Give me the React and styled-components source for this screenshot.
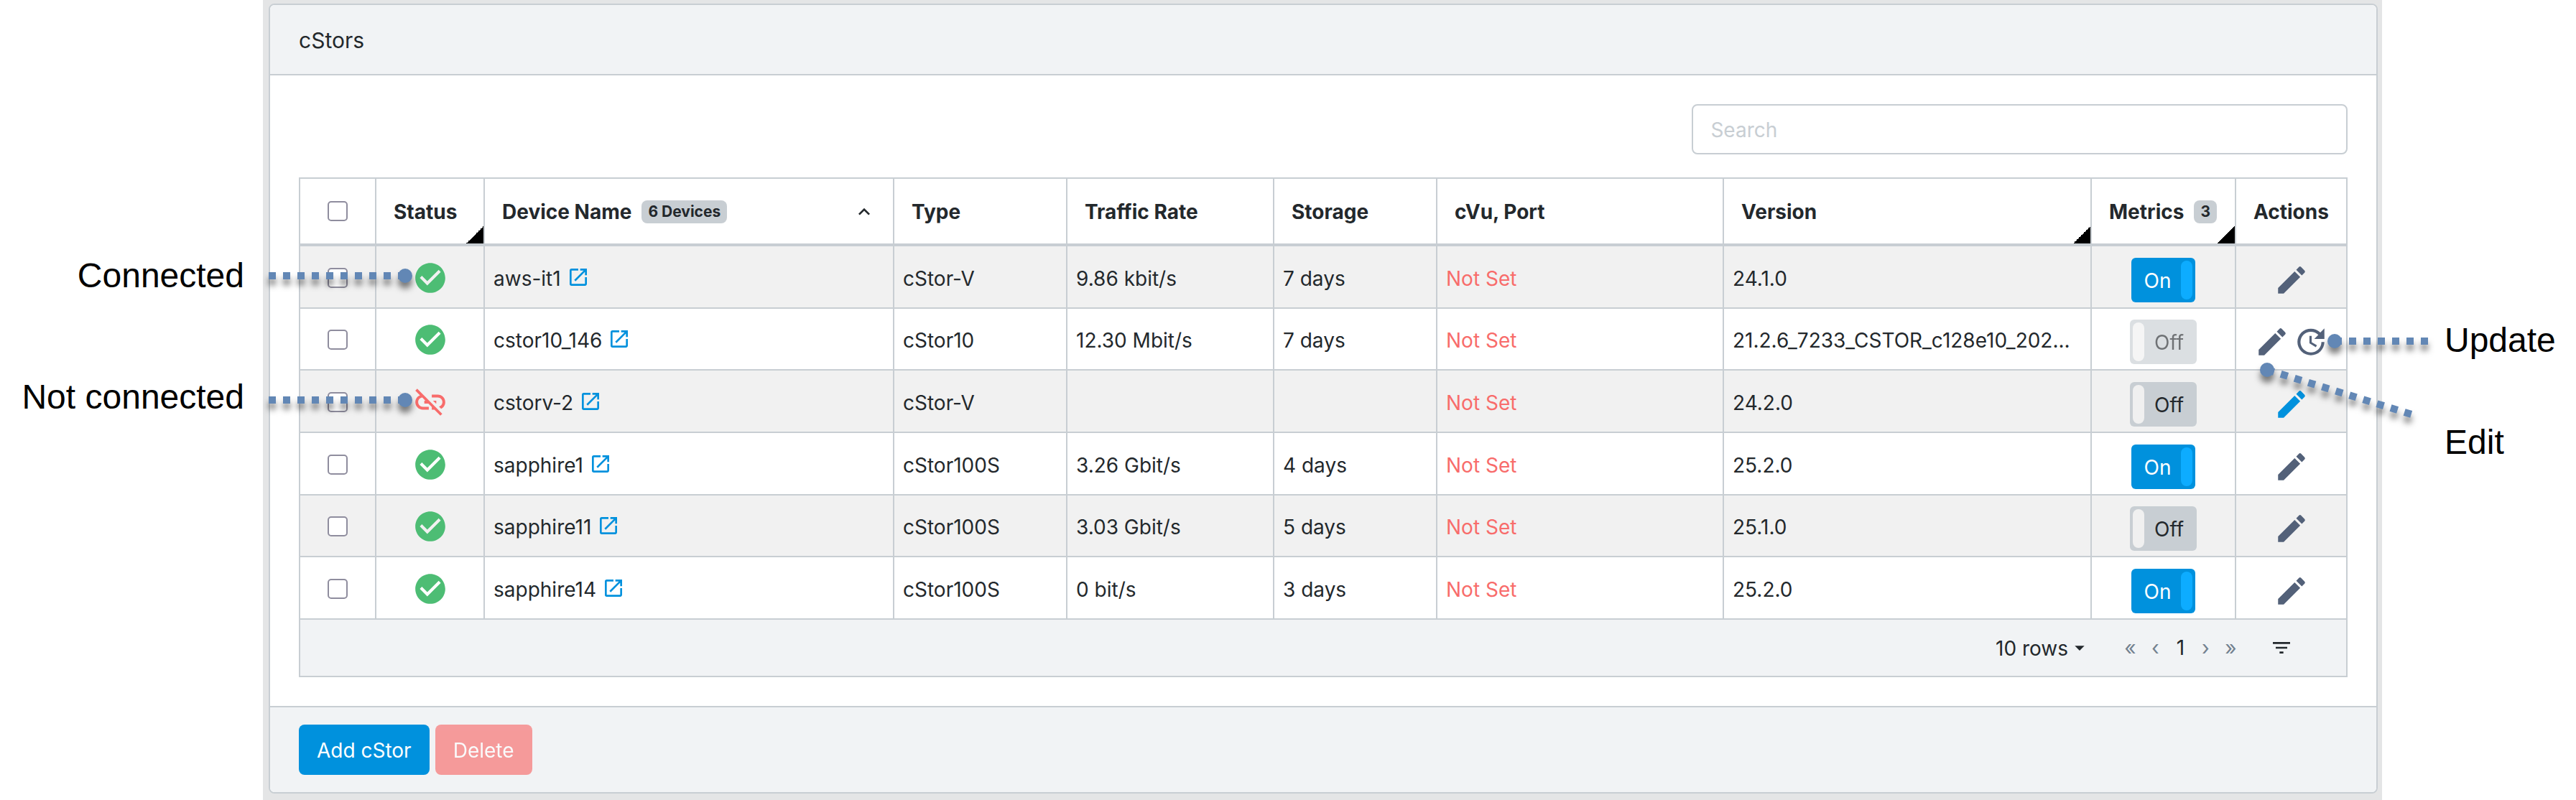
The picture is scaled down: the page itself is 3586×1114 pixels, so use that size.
import React from 'react';
import styled, { createGlobalStyle, css } from 'styled-components'
import {
  MdCheckCircle,
  MdLinkOff,
  MdOpenInNew,
  MdEdit,
  MdUpdate,
  MdFilterList,
  MdKeyboardArrowUp,
  MdArrowDropDown
} from 'react-icons/md'

const GlobalStyle = createGlobalStyle`
  * {
    box-sizing: border-box;
  }

  body {
    margin: 0;
    background-color: #fff;
    color: #23282c;
    font-family: Inter, 'Noto Sans', sans-serif;
    font-size: 28px;
    line-height: 42px;
  }

  button, input, select {
    font: inherit;
    color: inherit;
  }
`

const Page = styled.div`
  position: relative;
  display: grid;
  grid-template-columns: 366px minmax(0, 1fr) 270px;
`

const Notes = styled.aside`
  display: flex;
  flex-direction: column;
  color: #000;
  font-family: 'Liberation Sans', Arial, sans-serif;
  font-size: 48px;
  line-height: 56px;
  white-space: nowrap;
`

const LeftNotes = styled(Notes)`
  align-items: flex-end;
  gap: 113px;
  padding: 356px 26px 0 0;
`

const RightNotes = styled(Notes)`
  align-items: flex-start;
  gap: 86px;
  padding: 446px 0 0 87px;
`

const Note = styled.span`
  display: block;
`

// dotted pointers lie over the panel, anchored to its side
const Pointer = styled.svg`
  position: absolute;
  overflow: visible;
  pointer-events: none;
  top: 0;
  width: 1px;
  height: 1px;
  fill: #6287b5;
  stroke: #6287b5;
  filter: drop-shadow(0 8px 4px rgba(0, 0, 0, 0.5));
  ${props => props.$side === 'left' ? 'left: 0;' : 'right: 0;'}
`

const Surround = styled.main`
  background-color: #e4e5e6;
  padding: 5px 6px 9px 8px;
`

const Card = styled.section`
  background-color: #fff;
  border: 2px solid #c8ced3;
  border-radius: 8px;
  overflow: hidden;
`

const CardHeader = styled.header`
  background-color: #f1f3f5;
  border-bottom: 2px solid #c8ced3;
  padding: 28px 40px 26px;
`

const CardTitle = styled.h1`
  margin: 0;
  font-size: 30px;
  font-weight: 400;
  line-height: 42px;
`

const CardBody = styled.div`
  padding: 40px;
`

const CardFooter = styled.footer`
  display: flex;
  gap: 8px;
  background-color: #f1f3f5;
  border-top: 2px solid #c8ced3;
  padding: 24px 40px;
`

const SearchBar = styled.div`
  display: flex;
  justify-content: flex-end;
  margin-bottom: 32px;
`

const SearchInput = styled.input`
  width: 32%;
  height: 70px;
  padding: 14px 24px 12px;
  background-color: #fff;
  border: 2px solid #c8ced3;
  border-radius: 8px;

  &::placeholder {
    color: #c8ced3;
    opacity: 1;
  }
`

const TableFrame = styled.div`
  border: 2px solid #c8ced3;
`

const Table = styled.table`
  width: 100%;
  table-layout: fixed;
  border-collapse: separate;
  border-spacing: 0;
`

const Col = styled.col`
  width: ${props => props.$width};
`

const HeadCell = styled.th`
  height: 94px;
  padding: 2px 24px 0;
  border-bottom: 4px solid #c8ced3;
  border-left: 2px solid #c8ced3;
  text-align: left;
  font-weight: 700;
  white-space: nowrap;

  &:first-child {
    border-left: 0;
    padding: 0;
    text-align: center;
  }

  ${props => props.$corner && css`
    background: linear-gradient(135deg, transparent 50%, #000 50%) right bottom / 24px 24px no-repeat;
  `}
`

const HeadContent = styled.div`
  display: flex;
  align-items: center;
  gap: 14px;
`

const SortIcon = styled(MdKeyboardArrowUp)`
  margin-left: auto;
  font-size: 32px;
`

const Badge = styled.span`
  padding: 0 9px;
  border-radius: 8px;
  background-color: #c8ced3;
  font-size: 21px;
  line-height: 32px;
`

const Row = styled.tr`
  height: 87px;

  &:nth-child(odd) {
    background-color: #f1f1f1;
  }

  &:nth-child(3n + 2) {
    height: 86px;
  }
`

const Cell = styled.td`
  padding: 4px 12px 0;
  border-bottom: 2px solid #c8ced3;
  border-left: 2px solid #c8ced3;
  color: ${props => props.$danger ? '#f86c6b' : 'inherit'};
  white-space: nowrap;

  &:first-child {
    border-left: 0;
  }
`

const IconCell = styled(Cell)`
  padding: ${props => props.$low ? '8px 0 0' : '2px 0 0'};
  text-align: center;
`

const Centered = styled.div`
  display: flex;
  align-items: center;
  justify-content: center;
  gap: 4px;
`

const Checkbox = styled.input`
  appearance: none;
  display: block;
  width: 28px;
  height: 28px;
  margin: 0 auto;
  background-color: #fff;
  border: 2px solid #8f8d9e;
  border-radius: 5px;
`

const ConnectedIcon = styled(MdCheckCircle)`
  font-size: 50px;
  color: #4dbd74;
`

const BrokenIcon = styled(MdLinkOff)`
  font-size: 50px;
  color: #f86c6b;
`

const Device = styled.div`
  display: flex;
  align-items: center;
  gap: 8px;
`

const DeviceLink = styled.a`
  display: flex;
  padding-bottom: 4px;
  color: #0091dd;
  font-size: 32px;
`

const IconButton = styled.button`
  display: flex;
  padding: 0;
  border: 0;
  background: none;
  font-size: 50px;
  color: ${props => props.$active ? '#0091dd' : '#536179'};
`

const Toggle = styled.label`
  display: flex;
  align-items: center;
  gap: 14px;
  height: 62px;
  padding: 0 18px 0 4px;
  border-radius: 6px;
  background-color: #c8ced3;
  opacity: ${props => props.$disabled ? 0.65 : 1};

  ${props => props.$on && css`
    flex-direction: row-reverse;
    padding: 0 4px 0 18px;
    background-color: #0091dd;
    color: #fff;
  `}
`

const ToggleInput = styled.input`
  appearance: none;
  width: 16px;
  height: 54px;
  margin: 0;
  border-radius: 8px;
  background-color: #f0f0f0;

  &:checked {
    background-color: #0dacff;
  }
`

const ToggleText = styled.span`
  padding-top: 2px;
`

const Pagination = styled.div`
  display: flex;
  align-items: center;
  justify-content: flex-end;
  height: 78px;
  padding-right: 74px;
  background-color: #f1f3f5;
`

const RowsPicker = styled.label`
  display: flex;
  align-items: center;
  margin-right: 37px;
`

const RowsSelect = styled.select`
  appearance: none;
  padding: 2px 0 0;
  border: 0;
  background: none;
`

const RowsArrow = styled(MdArrowDropDown)`
  font-size: 32px;
`

const Pager = styled.nav`
  display: flex;
  align-items: center;
  margin-right: 37px;
`

const PageButton = styled.button`
  width: 35px;
  padding: 0;
  border: 0;
  background: none;
  text-align: center;
  color: ${props => props.$current ? '#23282c' : '#73818f'};
`

const FilterButton = styled.button`
  display: flex;
  padding: 0;
  border: 0;
  background: none;
  font-size: 32px;
`

const Button = styled.button`
  height: 70px;
  padding: 2px 25px 0;
  border: 0;
  border-radius: 8px;
  background-color: ${props => props.$color};
  color: #fff;

  &:disabled {
    opacity: 0.65;
  }
`

const columns = ['104px', '151px', '570px', '241px', '288px', '227px', '399px', 'auto', '201px', '155px']

const devices = [
  { name: 'aws-it1', connected: true, type: 'cStor-V', rate: '9.86 kbit/s', storage: '7 days', version: '24.1.0', metrics: true },
  { name: 'cstor10_146', connected: true, type: 'cStor10', rate: '12.30 Mbit/s', storage: '7 days', version: '21.2.6_7233_CSTOR_c128e10_202...', metrics: false, locked: true, update: true },
  { name: 'cstorv-2', connected: false, type: 'cStor-V', rate: '', storage: '', version: '24.2.0', metrics: false, active: true },
  { name: 'sapphire1', connected: true, type: 'cStor100S', rate: '3.26 Gbit/s', storage: '4 days', version: '25.2.0', metrics: true },
  { name: 'sapphire11', connected: true, type: 'cStor100S', rate: '3.03 Gbit/s', storage: '5 days', version: '25.1.0', metrics: false },
  { name: 'sapphire14', connected: true, type: 'cStor100S', rate: '0 bit/s', storage: '3 days', version: '25.2.0', metrics: true }
]

const DottedPointer = ({ side, x, y, toX, toY }) => (
  <Pointer $side={side} aria-hidden="true">
    <line x1={x} y1={y} x2={toX} y2={toY} strokeWidth="10" strokeDasharray="10 10" />
    <circle cx={x} cy={y} r="10" stroke="none" />
  </Pointer>
)

const DeviceRow = ({ device, metrics, onToggle }) => (
  <Row>
    <IconCell>
      <Checkbox type="checkbox" aria-label={'Select ' + device.name} />
    </IconCell>
    <IconCell>
      <Centered>
        {device.connected ? <ConnectedIcon title="Connected" /> : <BrokenIcon title="Not connected" />}
      </Centered>
    </IconCell>
    <Cell>
      <Device>
        {device.name}
        <DeviceLink href="#" aria-label={'Open ' + device.name}><MdOpenInNew /></DeviceLink>
      </Device>
    </Cell>
    <Cell>{device.type}</Cell>
    <Cell>{device.rate}</Cell>
    <Cell>{device.storage}</Cell>
    <Cell $danger>Not Set</Cell>
    <Cell>{device.version}</Cell>
    <IconCell $low>
      <Centered>
        <Toggle $on={metrics} $disabled={device.locked}>
          <ToggleInput
            type="checkbox"
            role="switch"
            checked={metrics}
            disabled={device.locked}
            onChange={onToggle}
          />
          <ToggleText>{metrics ? 'On' : 'Off'}</ToggleText>
        </Toggle>
      </Centered>
    </IconCell>
    <IconCell $low>
      <Centered>
        <IconButton $active={device.active} aria-label={'Edit ' + device.name}><MdEdit /></IconButton>
        {device.update && <IconButton aria-label={'Update ' + device.name}><MdUpdate /></IconButton>}
      </Centered>
    </IconCell>
  </Row>
)

class App extends React.Component {
  state = {
    search: '',
    metrics: devices.map(device => device.metrics)
  }

  onChangeSearch = (event) => {
    this.setState({search: event.target.value})
  }

  toggleMetrics = (index) => {
    const metrics = this.state.metrics.map((value, i) => i === index ? !value : value)
    this.setState({metrics})
  }

  render() {
    return (
      <Page>
        <GlobalStyle />
        <LeftNotes>
          <Note>Connected</Note>
          <Note>Not connected</Note>
        </LeftNotes>
        <Surround>
          <Card>
            <CardHeader>
              <CardTitle>cStors</CardTitle>
            </CardHeader>
            <CardBody>
              <SearchBar>
                <SearchInput
                  type="text"
                  aria-label="Search"
                  placeholder="Search"
                  value={this.state.search}
                  onChange={this.onChangeSearch}
                />
              </SearchBar>
              <TableFrame>
                <Table>
                  <colgroup>
                    {columns.map((width, index) => <Col key={index} $width={width} />)}
                  </colgroup>
                  <thead>
                    <tr>
                      <HeadCell><Checkbox type="checkbox" aria-label="Select all" /></HeadCell>
                      <HeadCell $corner>Status</HeadCell>
                      <HeadCell>
                        <HeadContent>
                          Device Name
                          <Badge>6 Devices</Badge>
                          <SortIcon />
                        </HeadContent>
                      </HeadCell>
                      <HeadCell>Type</HeadCell>
                      <HeadCell>Traffic Rate</HeadCell>
                      <HeadCell>Storage</HeadCell>
                      <HeadCell>cVu, Port</HeadCell>
                      <HeadCell $corner>Version</HeadCell>
                      <HeadCell $corner>
                        <HeadContent>
                          Metrics
                          <Badge>3</Badge>
                        </HeadContent>
                      </HeadCell>
                      <HeadCell>Actions</HeadCell>
                    </tr>
                  </thead>
                  <tbody>
                    {devices.map((device, index) => {
                      return <DeviceRow
                        key={device.name}
                        device={device}
                        metrics={this.state.metrics[index]}
                        onToggle={() => this.toggleMetrics(index)}
                      />
                    })}
                  </tbody>
                </Table>
                <Pagination>
                  <RowsPicker>
                    <RowsSelect aria-label="Rows per page">
                      <option>10 rows</option>
                    </RowsSelect>
                    <RowsArrow />
                  </RowsPicker>
                  <Pager aria-label="Pages">
                    <PageButton>«</PageButton>
                    <PageButton>‹</PageButton>
                    <PageButton $current>1</PageButton>
                    <PageButton>›</PageButton>
                    <PageButton>»</PageButton>
                  </Pager>
                  <FilterButton aria-label="Filter"><MdFilterList /></FilterButton>
                </Pagination>
              </TableFrame>
            </CardBody>
            <CardFooter>
              <Button $color="#0091dd">Add cStor</Button>
              <Button $color="#f86c6b" disabled>Delete</Button>
            </CardFooter>
          </Card>
        </Surround>
        <RightNotes>
          <Note>Update</Note>
          <Note>Edit</Note>
        </RightNotes>
        <DottedPointer side="left" x={564} y={384} toX={374} toY={384} />
        <DottedPointer side="left" x={564} y={557} toX={374} toY={557} />
        <DottedPointer side="right" x={-335} y={475} toX={-205} toY={475} />
        <DottedPointer side="right" x={-429} y={515} toX={-228} toY={577} />
      </Page>
    );
  }
}

export default App;
